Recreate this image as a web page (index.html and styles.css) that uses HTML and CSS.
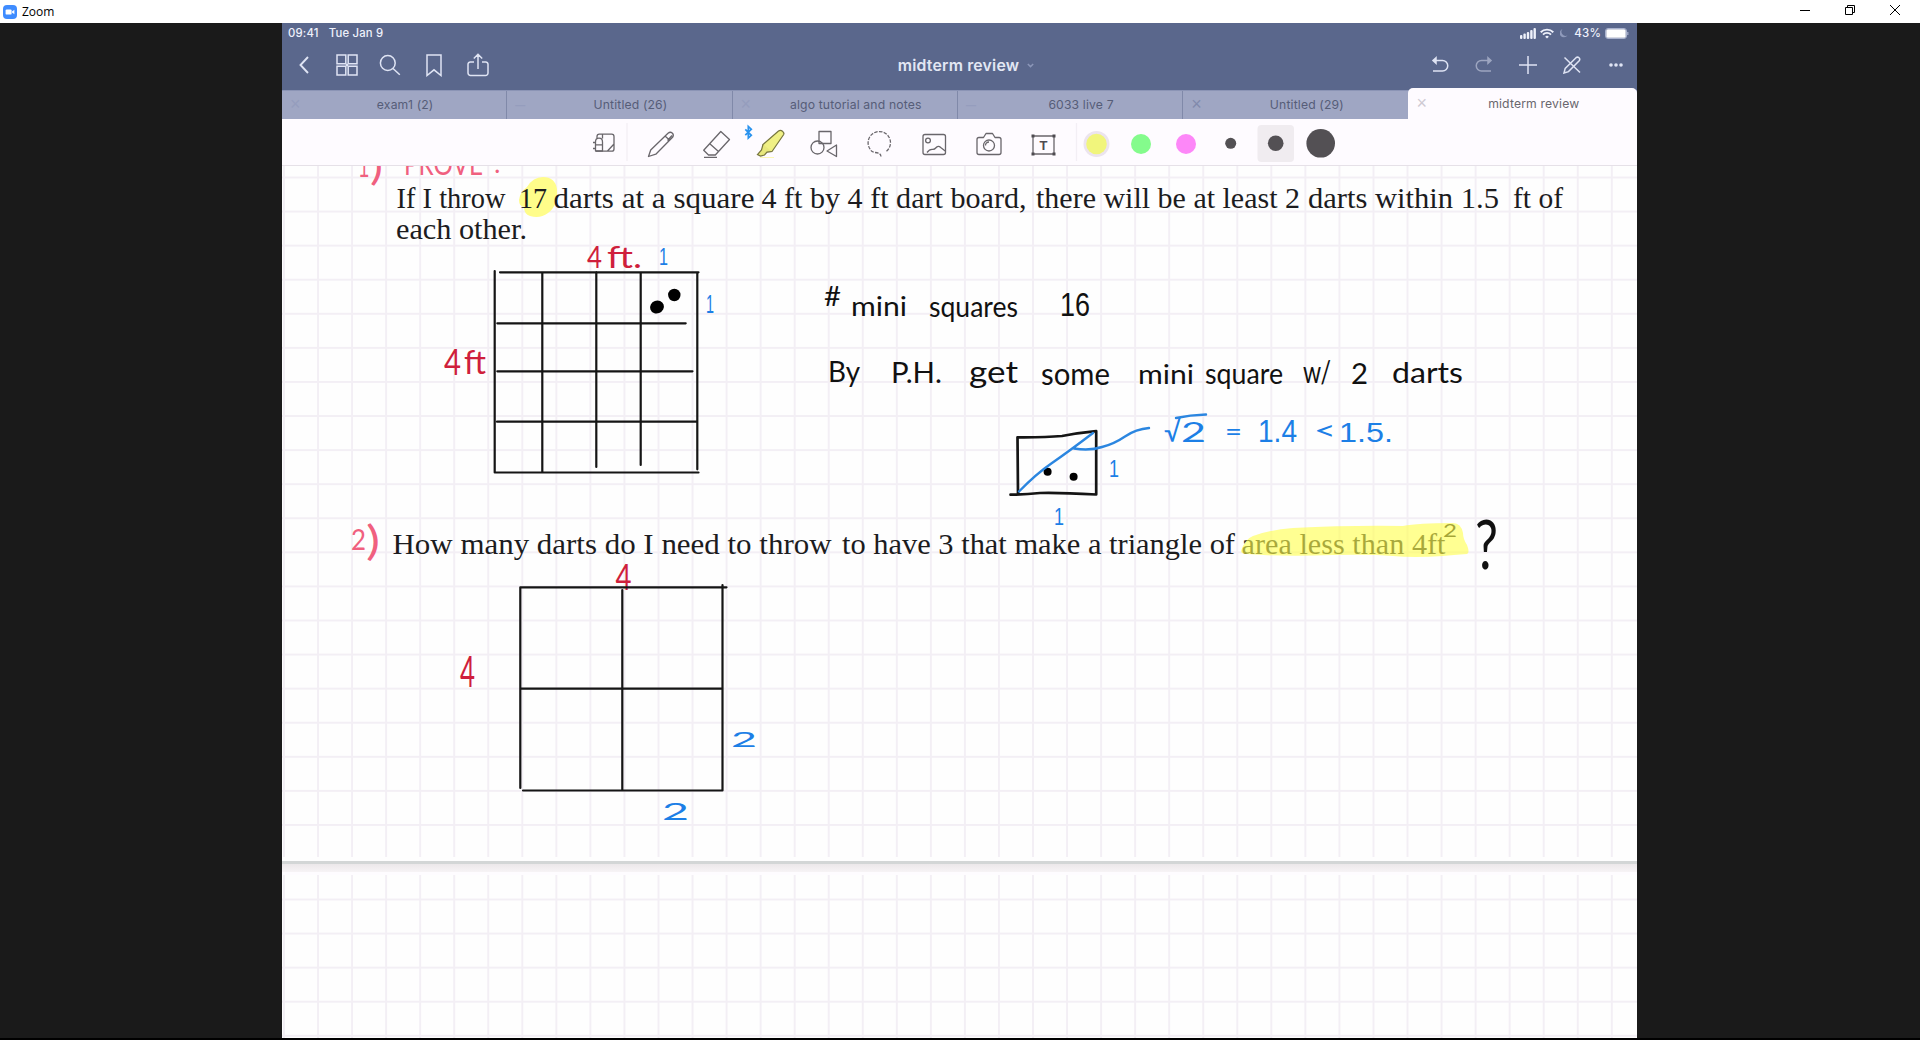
FILE: index.html
```html
<!DOCTYPE html>
<html lang="en">
<head>
<meta charset="utf-8">
<title>Zoom</title>
<link rel="stylesheet" href="styles.css">
</head>
<body>
<header class="titlebar">
  <svg class="app-logo" viewBox="0 0 14 14"><rect width="14" height="14" rx="4" fill="#3f8cff"/><rect x="2.6" y="4.4" width="6" height="5.2" rx="1.2" fill="#fff"/><path d="M9 6.4l2.4-1.7v4.6L9 7.600z" fill="#fff"/></svg>
  <span class="app-name">Zoom</span>
  <div class="window-buttons">
    <svg viewBox="0 0 10 10"><path d="M0 5.500h10"/></svg>
    <svg viewBox="0 0 10 10"><path d="M.5 2.500h7v7h-7zM2.500 2.500v-2h7v7h-2"/></svg>
    <svg viewBox="0 0 10 10"><path d="M0 0l10 10M10 0L0 10"/></svg>
  </div>
</header>

<main class="stage">
  <section class="tablet">
    <div class="status">
      <span class="clock">09:41</span><span class="date">Tue Jan 9</span>
      <div class="indicators">
        <svg width="16" height="11" viewBox="0 0 16 11" fill="#eef1fb"><rect y="7" width="2.400" height="4" rx="1"/><rect x="3.400" y="5.500" width="2.400" height="5.500" rx="1"/><rect x="6.800" y="4" width="2.400" height="7" rx="1"/><rect x="10.200" y="2" width="2.400" height="9" rx="1"/><rect x="13.500" width="2.400" height="11" rx="1"/></svg>
        <svg class="wifi" width="14" height="11" viewBox="0 0 14 11" fill="none" stroke="#eef1fb" stroke-width="1.900"><path d="M.7 4.200a9 9 0 0 1 12.600 0M3 6.600a5.600 5.600 0 0 1 8 0"/><path d="M7 10.500L5.200 8.700a2.600 2.600 0 0 1 3.600 0z" fill="#eef1fb" stroke="none"/></svg>
        <svg class="moon" width="8" height="10" viewBox="0 0 8 10"><path d="M2.500 1a4.200 4.200 0 0 0 5 6.500A4.300 4.300 0 1 1 2.500 1z" fill="#8f9abb"/></svg>
        <span class="percent">43%</span>
        <svg width="24" height="11" viewBox="0 0 24 11"><rect x=".5" y=".5" width="21" height="10" rx="2.500" fill="none" stroke="#a9b2ce"/><rect x="1.300" y="1.300" width="19.400" height="8.400" rx="1.500" fill="#fff"/><path d="M22.800 4v3" stroke="#a9b2ce" stroke-width="1.200"/></svg>
      </div>
    </div>

    <nav class="navbar">
      <div class="nav-left">
        <svg width="10" height="18" viewBox="0 0 10 18"><path d="M9 1L1.500 9 9 17" stroke-width="1.900"/></svg>
        <svg width="22" height="22" viewBox="0 0 22 22"><path d="M1 1h8.800v8.800H1zM12.200 1H21v8.800h-8.800zM1 12.200h8.800V21H1zM12.200 12.200H21V21h-8.800zM9.800 11h2.400M11 9.800v2.400"/></svg>
        <svg width="22" height="22" viewBox="0 0 22 22"><circle cx="8.800" cy="9" r="7.400"/><path d="M14 14.500l6.800 6.300"/></svg>
        <svg width="16" height="23" viewBox="0 0 16 23"><path d="M1 1h14v20.500L8 15.800 1 21.500z"/></svg>
        <svg width="22" height="24" viewBox="0 0 22 24"><path d="M7 9H3.500A2.300 2.300 0 0 0 1 11.300V20a2.500 2.500 0 0 0 2.500 2.500h15A2.500 2.500 0 0 0 21 20v-8.700A2.300 2.300 0 0 0 18.500 9H15M11 16V1.500M6.800 5.500L11 1.300l4.200 4.200"/></svg>
      </div>
      <div class="doc-title">midterm review<svg width="7" height="5" viewBox="0 0 7 5"><path d="M.8 1l2.700 2.600L6.200 1"/></svg></div>
      <div class="nav-right">
        <svg width="18" height="18" viewBox="0 0 18 18"><path d="M3 4.500h8.500a5 5 0 0 1 0 10.500H2"/><path d="M5 1.800L2 4.500l3 2.700z" fill="#dfe4f4"/></svg>
        <svg class="dim" width="18" height="18" viewBox="0 0 18 18"><path d="M15 4.500H6.500a5 5 0 0 0 0 10.500H16"/><path d="M13 1.800l3 2.700-3 2.700z" fill="#dfe4f4"/></svg>
        <svg width="18" height="18" viewBox="0 0 18 18"><path d="M9 0v18M0 9h18"/></svg>
        <svg width="18" height="18" viewBox="0 0 18 18"><path d="M1.500 1.500l15.500 15M1 17l1.200-4.600L13 1.700q1.600-1.200 3 .1t.2 3L5.500 15.600z"/></svg>
        <svg class="dots" width="14" height="4" viewBox="0 0 14 4"><circle cx="2" cy="2" r="1.800"/><circle cx="7" cy="2" r="1.800"/><circle cx="12" cy="2" r="1.800"/></svg>
      </div>
    </nav>

    <div class="tabs">
      <div class="tab"><i class="close faint">×</i><span>exam1 (2)</span></div>
      <div class="tab"><i class="close faint">–</i><span>Untitled (26)</span></div>
      <div class="tab"><i class="close faint">×</i><span>algo tutorial and notes</span></div>
      <div class="tab"><i class="close faint">–</i><span>6033 live 7</span></div>
      <div class="tab"><i class="close">×</i><span>Untitled (29)</span></div>
      <div class="tab active"><i class="close">×</i><span>midterm review</span></div>
    </div>

    <div class="toolbar">
      <svg class="tools" viewBox="282 119 1355 47">
        <g class="line">
          <path d="M597 138v-1.500q0-2.300 2.300-2.300h12.400q2.300 0 2.300 2.300v12.400q0 2.300-2.300 2.300H596M614 144l-6.500 7M602.500 134.500v4"/>
          <path d="M595.500 151v-9q0-3.800 3.500-3.800t3.500 3.800v9zM593 142.500h2M595 144.800h7.500M593 148.500h2"/>
          <path class="rule" d="M627 123v38M1076.500 123v38"/>
          <path d="M648.500 156.500l2.200-6.500 17.300-16.800q2.300-1.800 4.200-.2t.6 4l-17 17.200zM665 136l4.200 3.700M667.500 140.500l4.500-5"/>
          <path d="M720.800 131.500l8.700 8-14.200 15.500h-6.800l-4.800-4.700zM709.500 143.500l9 8M704 157.300h13"/>
          <path d="M819 131.500h12v12h-12z"/><circle cx="817.500" cy="147.500" r="6.500"/><path d="M836.500 145v11.500l-9.500-5.500z"/>
          <path d="M886.500 151.300A11.200 11.200 0 1 0 870 149q1.500 3 5 3.500 5.500.2 6 4" stroke-dasharray="3.500 1.300"/>
          <rect x="923" y="134.500" width="22.500" height="20" rx="2"/><circle cx="928" cy="140.500" r="2.400"/><path d="M927 152.500q2.500-3.500 5.500-3.200 2 .2 3.200-1.300 2.500-3 5-.5l4.500 3.500"/>
          <path d="M979 137.500h4.500l2.500-4h6.500l2.500 4h4q2 0 2 2v13q0 2-2 2h-20q-2 0-2-2v-13q0-2 2-2z"/><circle cx="989" cy="145.500" r="5.500"/><path d="M985.500 145.500a3.500 3.500 0 0 1 3.500-3.500"/>
          <path d="M1033 136h21v18h-21z"/>
        </g>
        <path d="M1031.500 134.500h3v3h-3zM1052.500 134.500h3v3h-3zM1031.500 152.500h3v3h-3zM1052.500 152.500h3v3h-3z" fill="#4e4b50"/>
        <text class="tool-t" x="1043.500" y="149.600" text-anchor="middle">T</text>
        <path d="M745.300 129.300l6 6-3 2.700v-11.500l3 2.700-6 6" fill="none" stroke="#2a93ee" stroke-width="1.700"/>
        <path d="M763 144.500L778.500 131q2-1.500 4 .2t1.200 3.300L772 151.500l-6.500.5z" fill="#f0f085" stroke="#77763f" stroke-width="1.200"/>
        <path d="M763 144.500l-1.500 5.500-4 4.500 3 1.500 4-1 2.500-3 5-.5" fill="#e8e87c" stroke="#77763f" stroke-width="1.200"/>
        <path d="M760 157.500h14" stroke="#fbf7b5"/>
        <circle cx="1096.500" cy="144" r="13" fill="#ece4ee"/><circle cx="1096.500" cy="144" r="10.300" fill="#f1f57c"/>
        <circle cx="1141" cy="144" r="10" fill="#84fb8c"/><circle cx="1186" cy="144" r="10" fill="#fd87f8"/>
        <rect x="1257.500" y="125" width="36.500" height="37" rx="4" fill="#f0ecf0"/>
        <g fill="#535054"><circle cx="1230.700" cy="143.300" r="5.500"/><circle cx="1275.700" cy="143.300" r="7.800"/><circle cx="1320.700" cy="143.300" r="14.300"/></g>
      </svg>
    </div>

    <div class="paper">
      <div class="sheet first"></div>
      <div class="gap"></div>
      <div class="sheet second"></div>
      <svg class="ink" viewBox="282 166 1355 872">
        <path class="marker solid" d="M519 200q1-8 8-13 6-10 16-10 12 0 14 12 1 17-9 24-8 6-18 3-6-2-6-9-5-1-5-7z"/>
        <g class="typed">
          <text x="396.500" y="208" textLength="109" lengthAdjust="spacingAndGlyphs">If I throw</text>
          <text x="519" y="208" textLength="28" lengthAdjust="spacingAndGlyphs">17</text>
          <text x="553.500" y="208" textLength="201" lengthAdjust="spacingAndGlyphs">darts at a square</text>
          <text x="761.500" y="208" textLength="265" lengthAdjust="spacingAndGlyphs">4 ft by 4 ft dart board,</text>
          <text x="1036" y="208" textLength="264" lengthAdjust="spacingAndGlyphs">there will be at least 2</text>
          <text x="1308" y="208" textLength="191" lengthAdjust="spacingAndGlyphs">darts within 1.5</text>
          <text x="1513" y="208" textLength="50" lengthAdjust="spacingAndGlyphs">ft of</text>
          <text x="396" y="238.500" textLength="131" lengthAdjust="spacingAndGlyphs">each other.</text>
          <text x="392.500" y="554.300" textLength="439" lengthAdjust="spacingAndGlyphs">How many darts do I need to throw</text>
          <text x="842" y="554.300" textLength="393" lengthAdjust="spacingAndGlyphs">to have 3 that make a triangle of</text>
          <text x="1241.500" y="554.300" textLength="204" lengthAdjust="spacingAndGlyphs">area less than 4ft</text>
        </g>
        <g class="hand red faded">
          <text class="one" x="359" y="176.500" font-size="30" textLength="10" lengthAdjust="spacingAndGlyphs">1</text>
          <text x="370" y="180" font-size="38" textLength="13" lengthAdjust="spacingAndGlyphs">)</text>
          <text x="404" y="175" font-size="30" textLength="79" lengthAdjust="spacingAndGlyphs">PROVE</text>
          <text x="494" y="173" font-size="26">:</text>
          <text x="351" y="550" font-size="29" textLength="15" lengthAdjust="spacingAndGlyphs">2</text>
          <text x="366" y="555" font-size="41" textLength="14" lengthAdjust="spacingAndGlyphs">)</text>
        </g>
        <g class="hand red">
          <text x="587" y="268" font-size="30" textLength="15" lengthAdjust="spacingAndGlyphs">4</text><text x="607" y="268" font-size="30" textLength="35" lengthAdjust="spacingAndGlyphs">ft.</text>
          <text x="444" y="374.500" font-size="36" textLength="17" lengthAdjust="spacingAndGlyphs">4</text><text x="464" y="374" font-size="33" textLength="22" lengthAdjust="spacingAndGlyphs">ft</text>
          <text x="615.500" y="590" font-size="36" textLength="16" lengthAdjust="spacingAndGlyphs">4</text>
          <text x="460" y="687" font-size="42" textLength="15" lengthAdjust="spacingAndGlyphs">4</text>
        </g>
        <g class="hand">
          <text x="824" y="306" font-size="27" textLength="17" lengthAdjust="spacingAndGlyphs">#</text>
          <text x="851" y="315.500" font-size="27" textLength="56" lengthAdjust="spacingAndGlyphs">mini</text>
          <text x="929" y="316.500" font-size="29" textLength="89" lengthAdjust="spacingAndGlyphs">squares</text>
          <text class="one" x="1060" y="315.700" font-size="33" textLength="30" lengthAdjust="spacingAndGlyphs">16</text>
          <text x="828" y="382" font-size="29" textLength="32" lengthAdjust="spacingAndGlyphs">By</text>
          <text x="891" y="383" font-size="29" textLength="51" lengthAdjust="spacingAndGlyphs">P.H.</text>
          <text x="969" y="383" font-size="31" textLength="49" lengthAdjust="spacingAndGlyphs">get</text>
          <text x="1041" y="384.500" font-size="30" textLength="69" lengthAdjust="spacingAndGlyphs">some</text>
          <text x="1138" y="383.500" font-size="27" textLength="56" lengthAdjust="spacingAndGlyphs">mini</text>
          <text x="1205" y="384" font-size="29" textLength="78" lengthAdjust="spacingAndGlyphs">square</text>
          <text x="1303" y="383" font-size="30" textLength="28" lengthAdjust="spacingAndGlyphs">w/</text>
          <text x="1351" y="384" font-size="28" textLength="17" lengthAdjust="spacingAndGlyphs">2</text>
          <text x="1392" y="382.500" font-size="28" textLength="71" lengthAdjust="spacingAndGlyphs">darts</text>
          <text x="1443" y="537" font-size="18" textLength="14" lengthAdjust="spacingAndGlyphs">2</text>
          <text x="1475" y="569" font-size="68" textLength="23" lengthAdjust="spacingAndGlyphs">?</text>
        </g>
        <g class="hand blue">
          <text class="one" x="659" y="264.500" font-size="23" textLength="9" lengthAdjust="spacingAndGlyphs">1</text>
          <text class="one" x="706" y="313" font-size="25" textLength="8" lengthAdjust="spacingAndGlyphs">1</text>
          <text x="1164" y="441.500" font-size="29" textLength="17" lengthAdjust="spacingAndGlyphs">√</text>
          <text x="1181" y="441.500" font-size="26" textLength="25" lengthAdjust="spacingAndGlyphs">2</text>
          <text x="1225" y="441" font-size="25" textLength="17" lengthAdjust="spacingAndGlyphs">=</text>
          <text class="one" x="1258" y="442" font-size="32" textLength="39" lengthAdjust="spacingAndGlyphs">1.4</text>
          <text x="1314" y="440" font-size="27" textLength="22" lengthAdjust="spacingAndGlyphs">&lt;</text>
          <text class="one" x="1339" y="441.500" font-size="27" textLength="54" lengthAdjust="spacingAndGlyphs">1.5.</text>
          <text class="one" x="1109" y="477" font-size="24" textLength="10" lengthAdjust="spacingAndGlyphs">1</text>
          <text class="one" x="1054" y="524.500" font-size="24" textLength="10" lengthAdjust="spacingAndGlyphs">1</text>
          <text x="731" y="747" font-size="22" textLength="26" lengthAdjust="spacingAndGlyphs">2</text>
          <text x="662" y="819.500" font-size="23" textLength="27" lengthAdjust="spacingAndGlyphs">2</text>
        </g>
        <g class="stroke">
          <path d="M494.700 271V472.500H698.500M500 272.300H698.500M697.300 272.300V469.300M542.300 273V472M596.300 272V467M640.700 273V465M497.300 323.300H685.700M497.300 371.300H692.500M497 421.700H697"/>
          <path d="M520.300 788V587.300H726.500M722.500 585V790.500H523M622.300 590V789.500M520.300 688.700H722.500"/>
          <path class="bold" d="M1018 494L1017.500 437.300Q1045 437.500 1062 436 1078 433 1096.200 431.200L1096.200 494.500Q1060 492.500 1040 493 1025 494.700 1010.500 494.700"/>
        </g>
        <ellipse cx="657" cy="307" rx="7" ry="6.300" transform="rotate(-20 657 307)"/><circle cx="674.300" cy="295" r="6.200"/>
        <circle cx="1047.600" cy="471.700" r="4"/><circle cx="1073.600" cy="476.700" r="4"/>
        <path class="blue-line" d="M1019 491.500Q1036 474 1052 463T1093 433M1074 448.500Q1090 451 1102 447 1114 444 1125 436.500T1149 428M1176 418Q1190 415 1206 414.500"/>
        <path class="marker" d="M1241 551q4-12 12-15 16-6 40-8 60-3 110-2 15-3 50-3 8 0 10 10 0 6 4 12 3 8 0 9-14 1-24 2-30 2-50 0-22-2-60-1-50 2-86-1-6 0-6-3z"/>
      </svg>
    </div>
  </section>
</main>
</body>
</html>
```
FILE: styles.css
```css
* { box-sizing: border-box; }
body {
  margin: 0;
  width: 1920px;
  height: 1040px;
  overflow: hidden;
  display: flex;
  flex-direction: column;
  background: #1a1a1a;
  font-family: Inter, "Liberation Sans", sans-serif;
}
svg { display: block; flex: none; }

.titlebar {
  height: 23px;
  flex: none;
  display: flex;
  align-items: center;
  background: #fff;
  padding-left: 3px;
}
.app-logo { width: 14px; height: 14px; }
.app-name { margin-left: 5px; font: 12px/22px "Open Sans", sans-serif; color: #000; }
.window-buttons { margin-left: auto; display: flex; gap: 35px; padding: 0 20px 3px 0; }
.window-buttons svg { width: 10px; height: 10px; fill: none; stroke: #000; }

.stage { flex: 1; display: flex; padding-left: 282px; min-height: 0; border-bottom: 2px solid #000; }
.tablet { width: 1355px; display: flex; flex-direction: column; background: #5a678c; }

.status {
  height: 20px;
  display: flex;
  align-items: center;
  padding: 0 8px 0 6px;
  color: #eef1fb;
  font-size: 11.300px;
  font-weight: 500;
  letter-spacing: .2px;
}
.date { margin-left: 10px; }
.indicators { margin-left: auto; display: flex; align-items: center; }
.wifi { margin-left: 4px; }
.moon { margin: 0 6px 0 6px; }
.percent { margin-right: 4px; font-size: 11.500px; }

.navbar {
  height: 46.500px;
  display: grid;
  grid-template-columns: 1fr auto 1fr;
  align-items: center;
  padding: 0 14px 2px 17px;
}
.navbar svg { fill: none; stroke: #dfe4f4; stroke-width: 1.500; }
.nav-left { display: flex; align-items: center; }
.nav-left svg:nth-child(2) { margin-left: 27px; }
.nav-left svg:nth-child(3) { margin-left: 21px; }
.nav-left svg:nth-child(4) { margin-left: 25px; }
.nav-left svg:nth-child(5) { margin-left: 25px; }
.doc-title { display: flex; align-items: center; gap: 8px; font-size: 15.800px; font-weight: 600; color: #e3e7f4; letter-spacing: .2px; padding-left: 10px; }
.navbar .doc-title svg { stroke: #8b96b8; }
.nav-right { display: flex; align-items: center; justify-content: flex-end; gap: 26px; }
.nav-right .dim { opacity: .5; }
.nav-right svg.dots { fill: #dfe4f4; stroke: none; margin-left: 2px; }

.tabs { height: 29.500px; display: flex; background: #9fa6c3; border-top: 1px solid #8b94b5; }
.tab {
  width: 225.300px;
  flex: none;
  position: relative;
  display: flex;
  align-items: center;
  justify-content: center;
  padding-left: 22px;
  border-right: 1px solid #8089a9;
  font-size: 12.200px;
  font-weight: 400;
  letter-spacing: .15px;
  color: #565d78;
}
.tab:nth-child(5) { border-right: 0; }
.close { position: absolute; left: 8px; top: 4px; font: 18px/19px "Liberation Sans", sans-serif; color: #818aac; }
.close.faint { color: #959dbd; }
.tab.active {
  flex: 1;
  margin-top: -3px;
  padding-bottom: 0;
  border: 0;
  border-radius: 5px 5px 0 0;
  background: #fefbff;
  color: #69666d;
}
.tab.active .close { top: 6px; color: #cfcad3; }

.toolbar { height: 47px; background: #fefbff; border-bottom: 1px solid #e6e1e8; }
.tools { width: 1355px; height: 47px; }
.line { fill: none; stroke: #69666b; stroke-width: 1.300; stroke-linejoin: round; }
.line .rule { stroke: #f3eff5; }
.tool-t { font: 600 13px "Liberation Sans", sans-serif; fill: #4e4b50; }

.paper { position: relative; flex: 1; display: flex; flex-direction: column; overflow: hidden; background: #fefefe; }
.sheet {
  background-color: #fefefe;
  background-image:
    linear-gradient(90deg, #f3eff5 2px, transparent 2px),
    linear-gradient(#f3eff5 2px, transparent 2px);
  background-size: 34.050px 34.080px;
}
.first { height: 695px; background-position: 1px 0, 0 10.500px; border-bottom: 4px solid #fefefe; }
.gap { height: 14px; border-top: 3px solid #d3d6d6; border-bottom: 3px solid #fefcff; background: linear-gradient(#ece8ea, #f7f4f6); }
.second { flex: 1; background-position: 1px 0, 0 23.500px; }
.ink { position: absolute; left: 0; top: 0; width: 1355px; height: 872px; }

.typed { font: 29.500px "Liberation Serif", serif; fill: #1c1c1e; }
.hand { font-family: Lato, sans-serif; fill: #111; }
.hand .one { font-family: "Liberation Sans", sans-serif; }
.hand.red { fill: #cf1f3c; }
.hand.faded { fill: #f0607f; }
.hand.blue { fill: #1c7fe6; }
.stroke { fill: none; stroke: #151515; stroke-width: 2.200; stroke-linecap: round; stroke-linejoin: round; }
.stroke .bold { stroke-width: 2.700; }
.blue-line { fill: none; stroke: #2b86e0; stroke-width: 2.400; stroke-linecap: round; }
.marker { fill: #ffff4f; fill-opacity: .62; }
.marker.solid { fill: #fffd8a; fill-opacity: 1; }
```
